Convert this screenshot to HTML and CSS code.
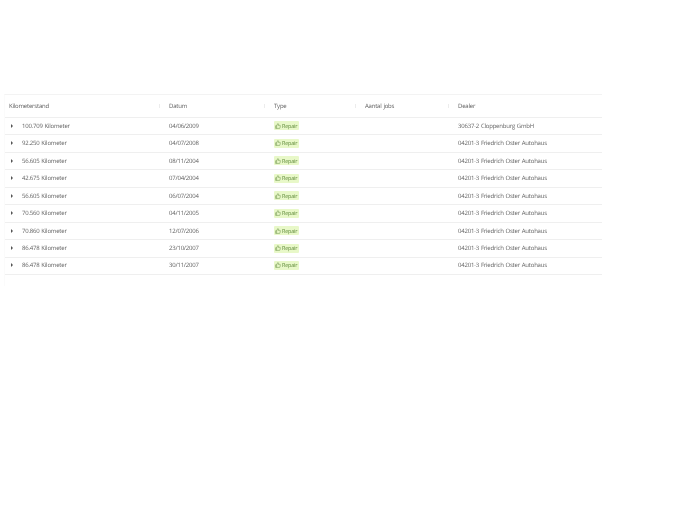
FILE: index.html
```html
<!DOCTYPE html>
<html lang="nl">
<head>
<meta charset="utf-8">
<title>Onderhoudshistorie</title>
<link rel="stylesheet" href="styles.css">
</head>
<body>
<svg class="defs" width="0" height="0" aria-hidden="true">
  <symbol id="like" viewBox="0 0 10 10">
    <path d="M1 4.6h1.7v4.4H1zM2.7 4.600 4.600 1c.8 0 1.200.6 1 1.300l-.4 1.600h2.900c.6 0 .9.5.8 1L8.300 8.300c-.1.5-.5.7-.9.7H2.700" fill="none" stroke="currentColor" stroke-width="0.800"/>
  </symbol>
</svg>
<main class="table">
  <div class="row head">
    <div class="cell">Kilometerstand<i class="sort"></i></div>
    <div class="cell">Datum<i class="sort"></i></div>
    <div class="cell">Type<i class="sort"></i></div>
    <div class="cell">Aantal jobs<i class="sort"></i></div>
    <div class="cell">Dealer</div>
  </div>
  <div class="row"><div class="cell km"><i class="caret"></i>100.709 Kilometer</div><div class="cell">04/06/2009</div><div class="cell"><span class="tag"><svg class="ico"><use href="#like"/></svg>Repair</span></div><div class="cell"></div><div class="cell">30637-2 Cloppenburg GmbH</div></div>
  <div class="row"><div class="cell km"><i class="caret"></i>92.250 Kilometer</div><div class="cell">04/07/2008</div><div class="cell"><span class="tag"><svg class="ico"><use href="#like"/></svg>Repair</span></div><div class="cell"></div><div class="cell">04201-3 Friedrich Oster Autohaus</div></div>
  <div class="row"><div class="cell km"><i class="caret"></i>56.605 Kilometer</div><div class="cell">08/11/2004</div><div class="cell"><span class="tag"><svg class="ico"><use href="#like"/></svg>Repair</span></div><div class="cell"></div><div class="cell">04201-3 Friedrich Oster Autohaus</div></div>
  <div class="row"><div class="cell km"><i class="caret"></i>42.675 Kilometer</div><div class="cell">07/04/2004</div><div class="cell"><span class="tag"><svg class="ico"><use href="#like"/></svg>Repair</span></div><div class="cell"></div><div class="cell">04201-3 Friedrich Oster Autohaus</div></div>
  <div class="row"><div class="cell km"><i class="caret"></i>56.605 Kilometer</div><div class="cell">06/07/2004</div><div class="cell"><span class="tag"><svg class="ico"><use href="#like"/></svg>Repair</span></div><div class="cell"></div><div class="cell">04201-3 Friedrich Oster Autohaus</div></div>
  <div class="row"><div class="cell km"><i class="caret"></i>70.560 Kilometer</div><div class="cell">04/11/2005</div><div class="cell"><span class="tag"><svg class="ico"><use href="#like"/></svg>Repair</span></div><div class="cell"></div><div class="cell">04201-3 Friedrich Oster Autohaus</div></div>
  <div class="row"><div class="cell km"><i class="caret"></i>70.860 Kilometer</div><div class="cell">12/07/2006</div><div class="cell"><span class="tag"><svg class="ico"><use href="#like"/></svg>Repair</span></div><div class="cell"></div><div class="cell">04201-3 Friedrich Oster Autohaus</div></div>
  <div class="row"><div class="cell km"><i class="caret"></i>86.478 Kilometer</div><div class="cell">23/10/2007</div><div class="cell"><span class="tag"><svg class="ico"><use href="#like"/></svg>Repair</span></div><div class="cell"></div><div class="cell">04201-3 Friedrich Oster Autohaus</div></div>
  <div class="row"><div class="cell km"><i class="caret"></i>86.478 Kilometer</div><div class="cell">30/11/2007</div><div class="cell"><span class="tag"><svg class="ico"><use href="#like"/></svg>Repair</span></div><div class="cell"></div><div class="cell">04201-3 Friedrich Oster Autohaus</div></div>
</main>
</body>
</html>
```

FILE: styles.css
```css
html, body {
  margin: 0;
  background: #fff;
}
body {
  padding: 94px 83px 0 4px;
  font-family: "Open Sans", Lato, sans-serif;
  font-size: 6px;
  letter-spacing: -0.21px;
  word-spacing: 0.5px;
  color: #636363;
  text-rendering: geometricPrecision;
}
.defs {
  position: absolute;
}
.table {
  border-top: 1px solid #f3f3f3;
  border-left: 1px solid #fbfbfb;
  padding-bottom: 11px;
  filter: blur(0.25px);
}
.row {
  display: grid;
  grid-template-columns: 160px 105px 91px 93px 148px;
  height: 17.440px;
  box-sizing: border-box;
  border-bottom: 1px solid #efefef;
  align-items: center;
}
.head {
  height: 23px;
  color: #5c5c5c;
}
.cell {
  display: flex;
  align-items: center;
  padding: 0 0 0.500px 4px;
  position: relative;
  white-space: pre;
}
.km {
  padding-left: 6px;
}
.caret {
  width: 0;
  height: 0;
  border-left: 2.500px solid #555;
  border-top: 2px solid transparent;
  border-bottom: 2px solid transparent;
  margin-right: 9px;
}
.sort {
  position: absolute;
  right: 5px;
  top: 50%;
  width: 1px;
  height: 4px;
  margin-top: -2px;
  background: #ececec;
}
.tag {
  display: inline-flex;
  align-items: center;
  height: 9px;
  padding: 0 1.500px 0 1px;
  background: #e8f8c8;
  color: #5f8a3a;
  border-radius: 1px;
  font-size: 5.500px;
}
.ico {
  width: 6px;
  height: 6px;
  margin-right: 1px;
}
```
